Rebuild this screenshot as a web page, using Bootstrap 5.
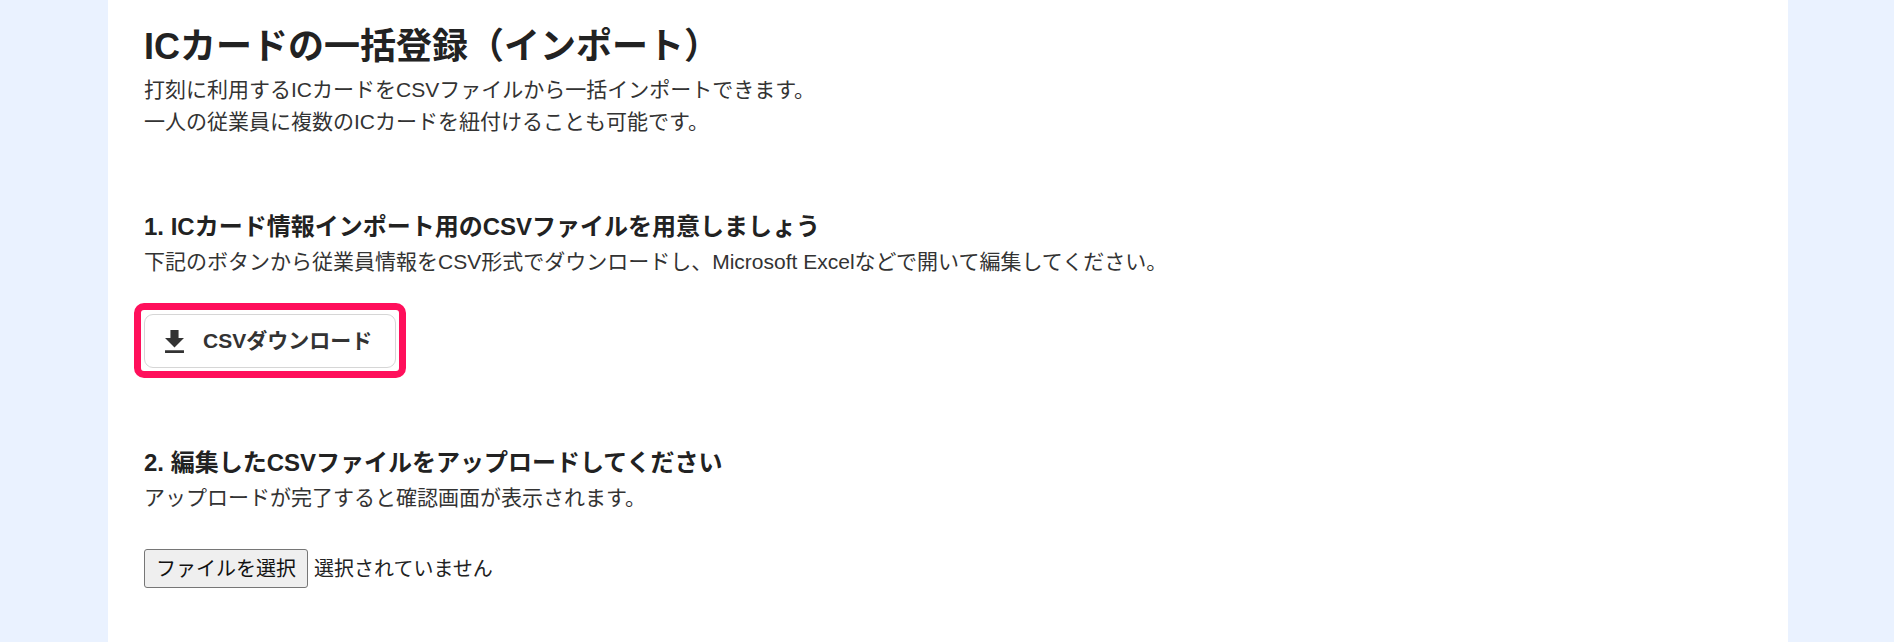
<!DOCTYPE html>
<html lang="ja">
<head>
<meta charset="utf-8">
<title>ICカードの一括登録</title>
<link rel="stylesheet" href="https://cdn.jsdelivr.net/npm/bootstrap@5.3.0/dist/css/bootstrap.min.css">
<style>
html,body{height:642px;overflow:hidden}
body{background:#eaf2ff;font-family:"Liberation Sans","Noto Sans CJK JP",sans-serif;color:#333;font-size:21px}
.sheet{width:1680px;margin-left:108px;height:642px;background:#fff;padding:23px 36px 0}
.ttl{font-size:36px;font-weight:700;line-height:47px;color:#222;margin:0 0 4px}
.lead-txt{margin:0;line-height:32px}
.step{font-size:24px;font-weight:700;line-height:32px;color:#222;margin:0 0 3px}
.sect1{margin-top:73px}
.sect2{margin-top:69px}
.hilite{width:272px;border:7px solid #ff0f5b;border-radius:10px;padding:4px 3px 3px;margin:25px 0 0 -10px}
.dl-btn{display:flex;align-items:center;gap:19px;height:54px;padding:0 20px;border:1px solid #d6d6d6;border-radius:9px;background:#fff;color:#333;font-size:21px;font-weight:700}
.pick{margin-top:35px;display:flex;align-items:center;font-size:20px}
.pick-btn{height:39px;width:164px;background:#efefef;border:1px solid #767676;border-radius:3px;color:#111;font-size:20px;padding:0;line-height:1}
.pick-lbl{margin-left:6px;color:#222}
</style>
</head>
<body>
<main class="sheet">
<h1 class="ttl">ICカードの一括登録（インポート）</h1>
<p class="lead-txt">打刻に利用するICカードをCSVファイルから一括インポートできます。<br>一人の従業員に複数のICカードを紐付けることも可能です。</p>
<section class="sect1">
<h2 class="step">1. ICカード情報インポート用のCSVファイルを用意しましょう</h2>
<p class="lead-txt">下記のボタンから従業員情報をCSV形式でダウンロードし、Microsoft Excelなどで開いて編集してください。</p>
<div class="hilite"><a class="dl-btn text-decoration-none" href="#"><svg width="19" height="23" viewBox="5 3 14 17" aria-hidden="true"><path fill="#333" d="M19 9h-4V3H9v6H5l7 7 7-7zM5 18v2h14v-2H5z"/></svg><span>CSVダウンロード</span></a></div>
</section>
<section class="sect2">
<h2 class="step">2. 編集したCSVファイルをアップロードしてください</h2>
<p class="lead-txt">アップロードが完了すると確認画面が表示されます。</p>
<div class="pick"><button type="button" class="pick-btn">ファイルを選択</button><span class="pick-lbl">選択されていません</span></div>
</section>
</main>
<script src="https://cdn.jsdelivr.net/npm/bootstrap@5.3.0/dist/js/bootstrap.bundle.min.js"></script>
</body>
</html>
